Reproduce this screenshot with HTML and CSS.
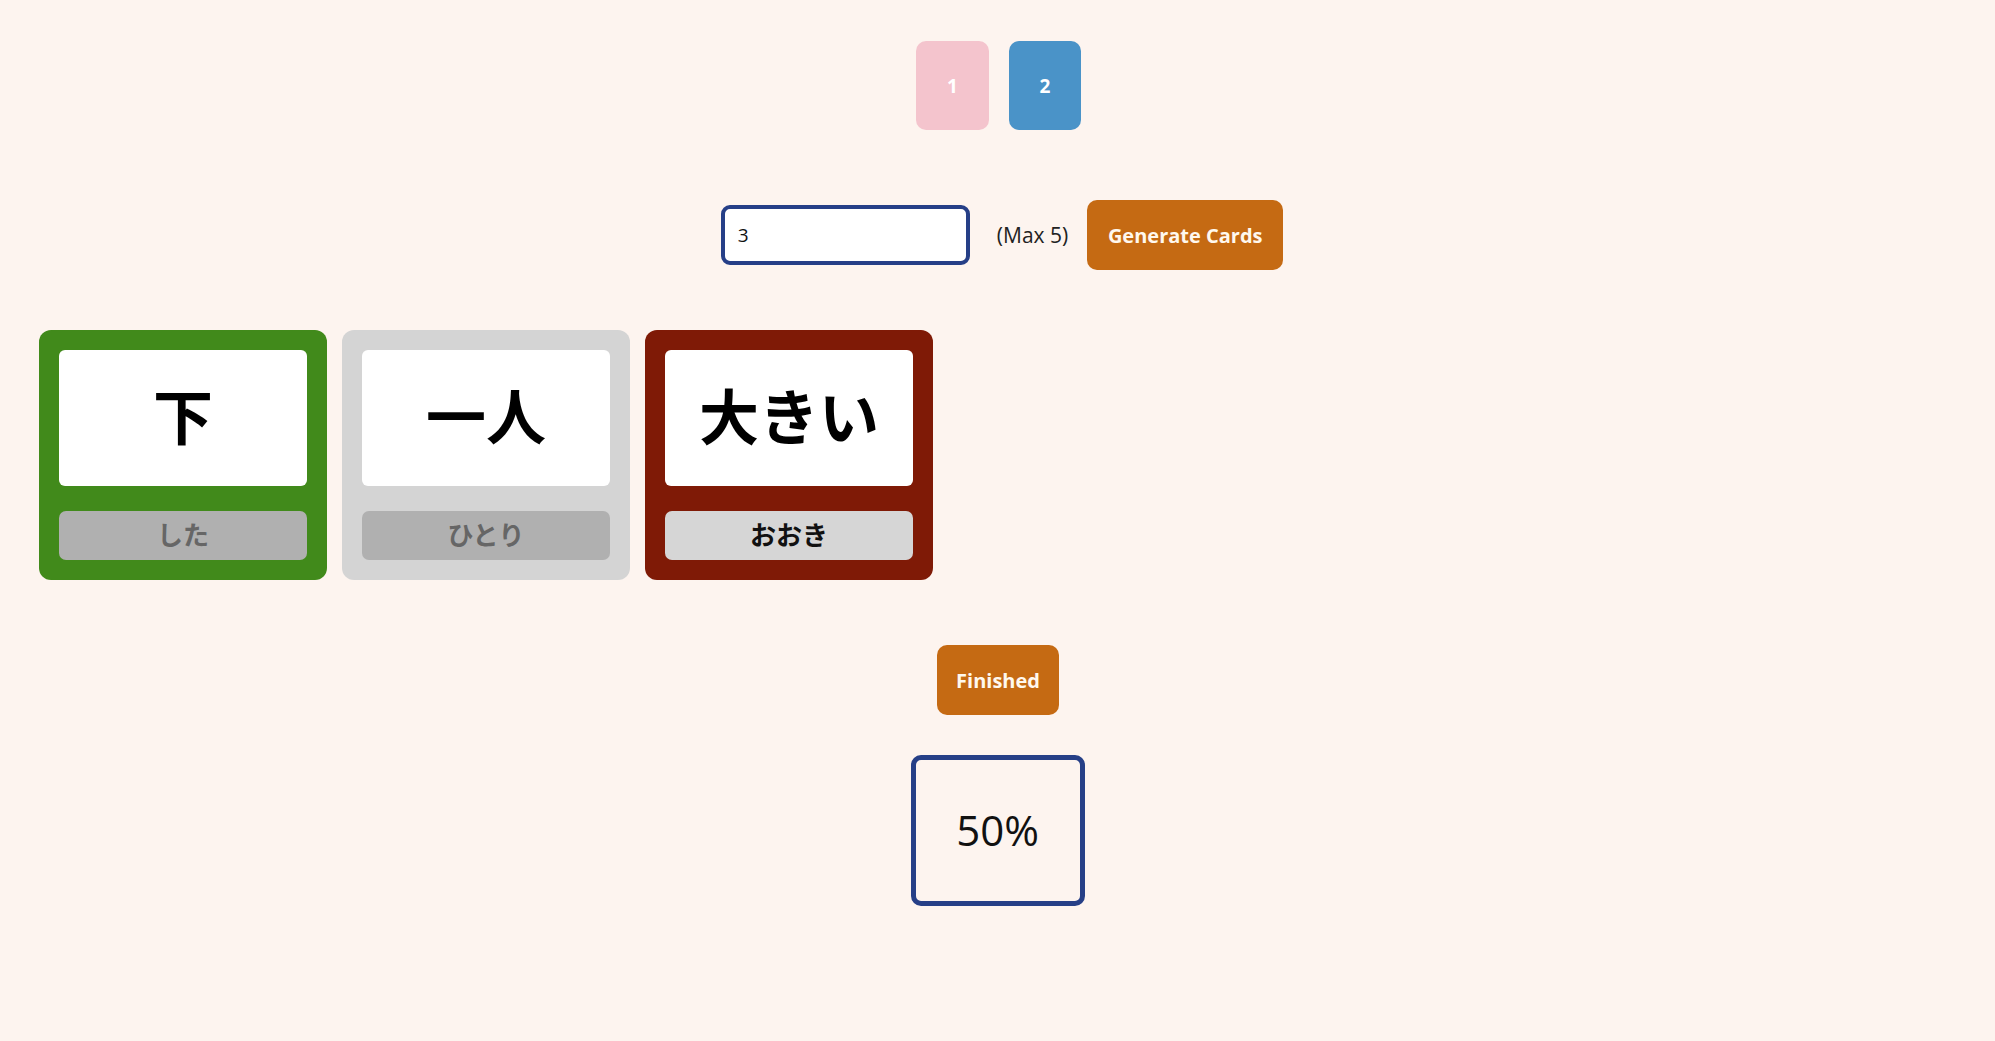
FILE: index.html
```html
<!DOCTYPE html>
<html lang="ja">
<head>
<meta charset="utf-8">
<title>Kanji Cards</title>
<link rel="stylesheet" href="styles.css">
</head>
<body>
<div class="app">
  <div class="pager">
    <button class="page-btn page-btn--pink">1</button>
    <button class="page-btn page-btn--blue">2</button>
  </div>

  <div class="controls">
    <input class="count-input" type="text" value="3">
    <span class="max-label">(Max 5)</span>
    <button class="action-btn action-btn--wide">Generate Cards</button>
  </div>

  <div class="cards">
    <div class="card card--green">
      <div class="card-face">下</div>
      <div class="card-reading card-reading--hidden">した</div>
    </div>
    <div class="card card--gray">
      <div class="card-face">一人</div>
      <div class="card-reading card-reading--hidden">ひとり</div>
    </div>
    <div class="card card--red">
      <div class="card-face">大きい</div>
      <div class="card-reading card-reading--shown">おおき</div>
    </div>
  </div>

  <div class="finish-row">
    <button class="action-btn action-btn--finish">Finished</button>
  </div>

  <div class="score-row">
    <div class="score-box">50%</div>
  </div>
</div>
</body>
</html>
```

FILE: styles.css
```css
html, body {
  margin: 0;
  padding: 0;
  background: #fdf4ef;
}

body {
  font-family: "Open Sans", "Noto Sans", "Noto Sans CJK JP", sans-serif;
  color: #111;
  min-height: 1041px;
}

.app {
  display: flex;
  flex-direction: column;
}

.pager {
  display: flex;
  justify-content: center;
  gap: 20px;
  padding-top: 41px;
  padding-left: 2px;
}

.page-btn {
  width: 73px;
  height: 89px;
  border: none;
  border-radius: 10px;
  color: #fff;
  font-family: "Open Sans", sans-serif;
  font-weight: 700;
  font-size: 19px;
  padding: 0;
}

.page-btn--pink {
  background: #f4c4cd;
}

.page-btn--blue {
  background: #4a93c8;
  width: 72px;
}

.controls {
  display: flex;
  justify-content: center;
  align-items: center;
  margin-top: 70px;
  padding-left: 9px;
}

.count-input {
  box-sizing: border-box;
  width: 249px;
  height: 60px;
  border: 4px solid #263f87;
  border-radius: 9px;
  background: #fff;
  padding: 0 13px;
  font-family: "Open Sans", sans-serif;
  font-size: 19px;
  color: #111;
  outline: none;
}

.max-label {
  margin-left: 27px;
  margin-right: 19px;
  font-size: 21px;
  color: #222;
}

.action-btn {
  border: none;
  border-radius: 10px;
  background: #c56a13;
  color: #fff8ee;
  font-family: "Open Sans", sans-serif;
  font-weight: 700;
  font-size: 20px;
  padding: 0;
  height: 70px;
}

.action-btn--wide {
  width: 196px;
}

.action-btn--finish {
  width: 122px;
}

.cards {
  display: flex;
  gap: 15px;
  margin-top: 60px;
  padding-left: 39px;
}

.card {
  box-sizing: border-box;
  width: 288px;
  height: 250px;
  border-radius: 12px;
  padding: 20px;
  display: flex;
  flex-direction: column;
}

.card--green { background: #418a1b; }
.card--gray { background: #d4d4d4; }
.card--red { background: #7f1a06; }

.card-face {
  box-sizing: border-box;
  height: 136px;
  padding-bottom: 10px;
  background: #fff;
  border-radius: 6px;
  display: flex;
  align-items: center;
  justify-content: center;
  font-family: "Noto Sans CJK JP", sans-serif;
  font-weight: 700;
  font-size: 60px;
  color: #000;
}

.card-reading {
  box-sizing: border-box;
  margin-top: 25px;
  height: 49px;
  padding-bottom: 4px;
  border-radius: 7px;
  display: flex;
  align-items: center;
  justify-content: center;
  font-family: "Noto Sans CJK JP", sans-serif;
  font-weight: 700;
  font-size: 26px;
}

.card-reading--hidden {
  background: #b0b0b0;
  color: #666;
}

.card-reading--shown {
  background: #d6d6d6;
  color: #111;
}

.finish-row {
  display: flex;
  justify-content: center;
  margin-top: 65px;
  padding-left: 1px;
}

.score-row {
  display: flex;
  justify-content: center;
  margin-top: 40px;
}

.score-box {
  box-sizing: border-box;
  width: 174px;
  height: 151px;
  border: 5px solid #263f87;
  border-radius: 10px;
  padding-bottom: 3px;
  display: flex;
  align-items: center;
  justify-content: center;
  font-family: "Open Sans", sans-serif;
  font-size: 42px;
  color: #111;
}
```
